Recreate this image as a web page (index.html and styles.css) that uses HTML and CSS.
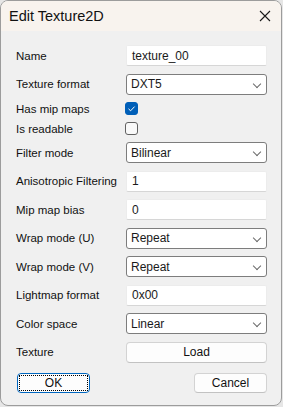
FILE: index.html
```html
<!DOCTYPE html>
<html lang="en">
<head>
    <meta charset="UTF-8">
    <title>Edit Texture2D</title>
    <link rel="stylesheet" href="styles.css">
</head>
<body>
    <div class="window">
        <div class="titlebar">
            <span class="title">Edit Texture2D</span>
            <span class="close">
                <svg width="12" height="12" viewBox="0 0 12 12"><path d="M1 1L11 11M11 1L1 11" stroke="#1a1a1a" stroke-width="1.1" fill="none"/></svg>
            </span>
        </div>

        <div class="content">
            <div class="form">
                <label class="field-label">Name</label>
                <div class="textbox">texture_00</div>

                <label class="field-label">Texture format</label>
                <div class="combo">DXT5<span class="chevron"></span></div>

                <label class="field-label">Has mip maps</label>
                <span class="checkbox checked">
                    <svg width="13" height="13" viewBox="0 0 13 13"><path d="M3.5 6.8L5.6 8.8L9.6 4.6" stroke="#fff" stroke-width="1" fill="none"/></svg>
                </span>

                <label class="field-label">Is readable</label>
                <span class="checkbox"></span>

                <label class="field-label">Filter mode</label>
                <div class="combo">Bilinear<span class="chevron"></span></div>

                <label class="field-label">Anisotropic Filtering</label>
                <div class="textbox">1</div>

                <label class="field-label">Mip map bias</label>
                <div class="textbox">0</div>

                <label class="field-label">Wrap mode (U)</label>
                <div class="combo">Repeat<span class="chevron"></span></div>

                <label class="field-label">Wrap mode (V)</label>
                <div class="combo">Repeat<span class="chevron"></span></div>

                <label class="field-label">Lightmap format</label>
                <div class="textbox">0x00</div>

                <label class="field-label">Color space</label>
                <div class="combo">Linear<span class="chevron"></span></div>

                <label class="field-label">Texture</label>
                <button class="btn">Load</button>
            </div>

            <div class="actions">
                <button class="btn btn-default"><span class="focus">OK</span></button>
                <button class="btn">Cancel</button>
            </div>
        </div>
    </div>
</body>
</html>
```
FILE: styles.css
```css
body {
    margin: 0;
    background-color: #e6e6e6;
    font-family: "Liberation Sans", Arial, sans-serif;
    font-size: 11.5px;
    color: #1a1a1a;
}

.window {
    width: 280px;
    height: 404px;
    border: 1px solid #9c9c9c;
    border-radius: 8px;
    background-color: #f0f0f0;
    overflow: hidden;
}

.titlebar {
    height: 30px;
    background-color: #f8f3ee;
    display: flex;
    align-items: center;
    justify-content: space-between;
    padding: 0 9px 0 8px;
}

.title {
    font-size: 14.5px;
    color: #111;
}

.close {
    display: flex;
    margin-right: 1px;
}

.content {
    padding: 14px 14px 0 15px;
}

.form {
    display: grid;
    grid-template-columns: 110px 141px;
    grid-template-rows: 21.5px 21.5px 13px 13px repeat(8, 21.5px);
    row-gap: 7px;
    align-items: center;
}

.field-label {
    color: #111;
    white-space: nowrap;
}

.textbox,
.combo {
    height: 21px;
    box-sizing: border-box;
    background-color: #fff;
    padding: 0 5px;
    display: flex;
    align-items: center;
    position: relative;
    font-size: 12px;
}

.textbox {
    border: 1px solid #ececec;
    border-bottom-color: #d6d6d6;
    border-radius: 2px;
}

.combo {
    border: 1px solid #7d7d7d;
    border-radius: 3px;
    padding-left: 4px;
}

.chevron {
    position: absolute;
    right: 6px;
    top: 6px;
    width: 5px;
    height: 5px;
    border-right: 1px solid #6a6a6a;
    border-bottom: 1px solid #6a6a6a;
    transform: rotate(45deg);
}

.checkbox {
    width: 13px;
    height: 13px;
    box-sizing: border-box;
    border: 1px solid #616161;
    border-radius: 3px;
    background-color: #f9f9f9;
    display: flex;
    margin-left: -1px;
}

.checkbox.checked {
    background-color: #005fb8;
    border-color: #005fb8;
}

.checkbox svg {
    margin: -1px;
}

.btn {
    height: 21px;
    box-sizing: border-box;
    background-color: #fdfdfd;
    border: 1px solid #d3d3d3;
    border-bottom-color: #c2c2c2;
    border-radius: 4px;
    font-family: inherit;
    font-size: 12px;
    color: #111;
    padding: 0;
}

.actions {
    display: flex;
    justify-content: space-between;
    margin-top: 10px;
    padding-left: 1px;
}

.actions .btn {
    width: 73px;
    height: 20px;
}

.btn-default {
    border: 1px solid #0067c0;
    padding: 1px;
}

.focus {
    display: flex;
    align-items: center;
    justify-content: center;
    height: 100%;
    box-sizing: border-box;
    border: 1px dotted #000;
}
```
